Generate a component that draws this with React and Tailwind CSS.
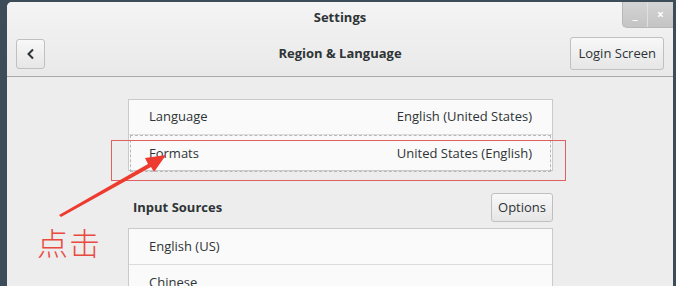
import React from 'react';

const font = { fontFamily: '"Open Sans", "DejaVu Sans", sans-serif' };

const Row = ({ left, right, focused, last, tall }) => (
    <div className={`${tall ? 'h-[36px]' : 'h-[35px]'} shrink-0 flex items-center justify-between px-[20px] ${last ? '' : 'border-b border-[#dcdcdc]'}`}>
        <div className={`flex-1 h-full flex items-center justify-between ${focused ? 'outline outline-1 outline-dashed outline-[#b8b8b8] -mx-[18px] px-[18px] mt-[2px] h-[31px]' : ''}`}>
            <span>{left}</span>
            {right && <span>{right}</span>}
        </div>
    </div>
);

const Annotation = () => (
    <>
        <div className="absolute left-[111px] top-[140px] w-[455px] h-[41px] border border-[#e06060]" />
        <svg className="absolute left-0 top-0" width="676" height="286" viewBox="0 0 676 286">
            <polygon points="59,215 148,164 145,158 166,155 154,172 151,167 61,217" fill="#ee3b2f" />
        </svg>
        <div className="absolute left-[37px] top-[226px] text-[31px] leading-none text-[#e84a3f] font-light tracking-[1px]" style={{ fontFamily: '"Noto Sans CJK SC", serif' }}>点击</div>
    </>
);

export default function App() {
    return (
        <div className="w-[676px] h-[286px] bg-[#3c4c58] pt-[2px] pl-[7px] pr-[3px] overflow-hidden relative" style={font}>
            <div className="h-full bg-[#ededed] rounded-tl-[5px] rounded-tr-[3px] flex flex-col text-[13px] text-[#2e3436]">
                <div className="h-[75px] shrink-0 bg-gradient-to-b from-[#f4f4f4] to-[#e9e9e9] border-b border-[#a9a9a9] rounded-t-[5px] flex flex-col">
                    <div className="h-[28px] grid grid-cols-[1fr_auto_1fr] items-start">
                        <div />
                        <div className="font-bold pt-[6px]">Settings</div>
                        <div className="flex justify-end">
                            <div className="flex h-[26px] bg-gradient-to-b from-[#d4d4d4] to-[#c4c4c4] rounded-bl-[5px] border-l border-b border-[#b8b8b8] text-white text-[12px] font-bold">
                                <div className="w-[25px] flex items-center justify-center border-r border-[#e0e0e0]">_</div>
                                <div className="w-[25px] flex items-center justify-center">×</div>
                            </div>
                        </div>
                    </div>
                    <div className="flex-1 grid grid-cols-[1fr_auto_1fr] items-center px-[9px] pt-[1px]">
                        <div>
                            <div className="w-[29px] h-[30px] border border-[#c0c0c0] rounded-[3px] bg-gradient-to-b from-[#f8f8f8] to-[#e6e6e6] flex items-center justify-center">
                                <svg width="10" height="12" viewBox="0 0 10 12"><path d="M7 1.5 L2.5 6 L7 10.5" fill="none" stroke="#2e3436" strokeWidth="2" /></svg>
                            </div>
                        </div>
                        <div className="font-bold">Region &amp; Language</div>
                        <div className="flex justify-end">
                            <div className="h-[33px] px-[7px] border border-[#c0c0c0] rounded-[3px] bg-gradient-to-b from-[#f8f8f8] to-[#e6e6e6] flex items-center">Login Screen</div>
                        </div>
                    </div>
                </div>
                <div className="pl-[121px] pt-[22px]">
                    <div className="w-[425px] bg-[#fafafa] border border-[#cacaca]">
                        <Row left="Language" right="English (United States)" />
                        <Row left="Formats" right="United States (English)" focused last />
                    </div>
                    <div className="w-[425px] flex items-center justify-between mt-[22px] pl-[5px]">
                        <span className="font-bold">Input Sources</span>
                        <div className="h-[29px] px-[6px] border border-[#c0c0c0] rounded-[3px] bg-gradient-to-b from-[#f8f8f8] to-[#e6e6e6] flex items-center">Options</div>
                    </div>
                    <div className="w-[425px] bg-[#fafafa] border border-[#cacaca] mt-[6px]">
                        <Row left="English (US)" tall />
                        <Row left="Chinese" tall />
                    </div>
                </div>
            </div>
            <Annotation />
        </div>
    );
}
